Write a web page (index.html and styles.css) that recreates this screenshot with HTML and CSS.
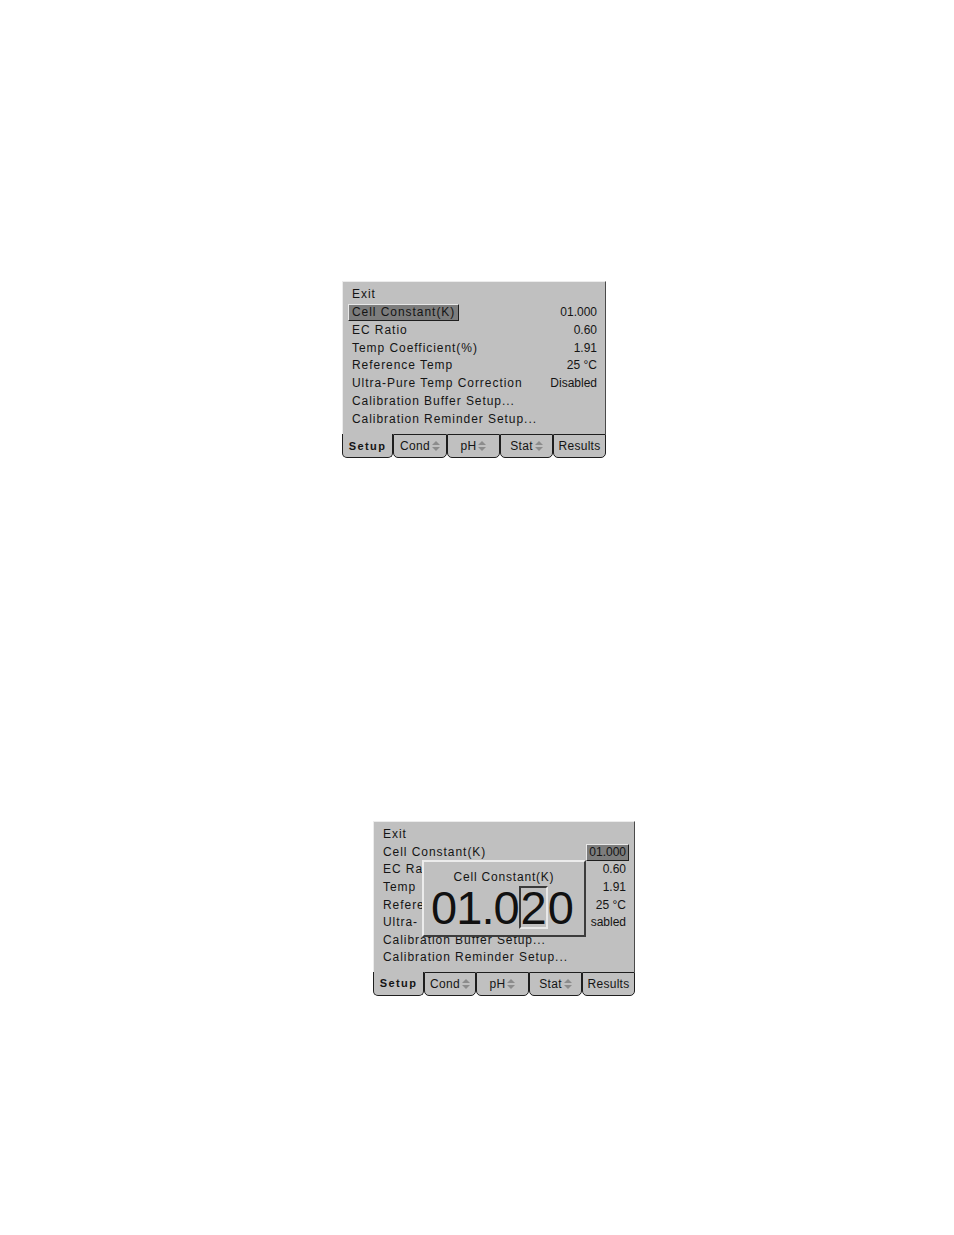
FILE: index.html
```html
<!DOCTYPE html>
<html>
<head>
<meta charset="utf-8">
<link rel="stylesheet" href="styles.css">
</head>
<body>
<div class="page">
  <div class="screen s1">
    <div class="list">
      <div class="row"><span class="cell lbl">Exit</span></div>
      <div class="row"><span class="cell lbl hl">Cell Constant(K)</span><span class="cell val">01.000</span></div>
      <div class="row"><span class="cell lbl">EC Ratio</span><span class="cell val">0.60</span></div>
      <div class="row"><span class="cell lbl">Temp Coefficient(%)</span><span class="cell val">1.91</span></div>
      <div class="row"><span class="cell lbl">Reference Temp</span><span class="cell val">25 °C</span></div>
      <div class="row"><span class="cell lbl">Ultra-Pure Temp Correction</span><span class="cell val">Disabled</span></div>
      <div class="row"><span class="cell lbl">Calibration Buffer Setup...</span></div>
      <div class="row"><span class="cell lbl">Calibration Reminder Setup...</span></div>
    </div>
    <div class="tabs">
      <div class="tab on t-setup">Setup</div>
      <div class="tab t-cond">Cond<svg class="arr" width="8" height="10" viewBox="0 0 8 10"><polygon points="0,4 4,0 8,4" /><polygon points="0,6 4,10 8,6" /></svg></div>
      <div class="tab t-ph">pH<svg class="arr" width="8" height="10" viewBox="0 0 8 10"><polygon points="0,4 4,0 8,4" /><polygon points="0,6 4,10 8,6" /></svg></div>
      <div class="tab t-stat">Stat<svg class="arr" width="8" height="10" viewBox="0 0 8 10"><polygon points="0,4 4,0 8,4" /><polygon points="0,6 4,10 8,6" /></svg></div>
      <div class="tab t-res">Results</div>
    </div>
  </div>

  <div class="screen s2">
    <div class="list">
      <div class="row"><span class="cell lbl">Exit</span></div>
      <div class="row"><span class="cell lbl">Cell Constant(K)</span><span class="cell val hl">01.000</span></div>
      <div class="row"><span class="cell lbl">EC Ra</span><span class="cell val">0.60</span></div>
      <div class="row"><span class="cell lbl">Temp</span><span class="cell val">1.91</span></div>
      <div class="row"><span class="cell lbl">Refere</span><span class="cell val">25 °C</span></div>
      <div class="row"><span class="cell lbl">Ultra-</span><span class="cell val">sabled</span></div>
      <div class="row"><span class="cell lbl">Calibration Buffer Setup...</span></div>
      <div class="row"><span class="cell lbl">Calibration Reminder Setup...</span></div>
    </div>
    <div class="tabs">
      <div class="tab on t-setup">Setup</div>
      <div class="tab t-cond">Cond<svg class="arr" width="8" height="10" viewBox="0 0 8 10"><polygon points="0,4 4,0 8,4" /><polygon points="0,6 4,10 8,6" /></svg></div>
      <div class="tab t-ph">pH<svg class="arr" width="8" height="10" viewBox="0 0 8 10"><polygon points="0,4 4,0 8,4" /><polygon points="0,6 4,10 8,6" /></svg></div>
      <div class="tab t-stat">Stat<svg class="arr" width="8" height="10" viewBox="0 0 8 10"><polygon points="0,4 4,0 8,4" /><polygon points="0,6 4,10 8,6" /></svg></div>
      <div class="tab t-res">Results</div>
    </div>
    <div class="popup">
      <div class="ptitle">Cell Constant(K)</div>
      <div class="pdigits">01.0<span class="cur">2</span>0</div>
    </div>
  </div>
</div>
</body>
</html>
```
FILE: styles.css
```css
html, body {
  margin: 0;
  padding: 0;
  background: #ffffff;
}

.page {
  display: flex;
  flex-direction: column;
  padding-top: 281px;
}

.screen {
  position: relative;
  font-family: "Liberation Sans", Arial, sans-serif;
  color: #141414;
}

.s1 {
  width: 264px;
  margin-left: 342px;
}

.s2 {
  width: 262px;
  margin-left: 373px;
  margin-top: 363px;
}

.list {
  box-sizing: border-box;
  background: #c0c0c0;
  border-top: 1px solid #ececec;
  border-left: 1px solid #ececec;
  border-right: 1px solid #4a4a4a;
  padding: 4px 5px 6px 5px;
}

.s2 .list {
  padding-bottom: 5px;
}

.row {
  display: flex;
  justify-content: space-between;
  align-items: center;
  height: 17.75px;
  font-size: 12px;
}

.s2 .row {
  height: 17.6px;
}

.cell {
  display: block;
  line-height: 15px;
  border: 1px solid transparent;
  white-space: nowrap;
}

.lbl {
  padding: 0 3px;
  letter-spacing: 0.95px;
}

.val {
  padding: 0 2px;
  letter-spacing: 0;
}

.hl {
  background: #7d7d7d;
  border-color: #e8e8e8 #1e1e1e #1e1e1e #e8e8e8;
}

.tabs {
  display: flex;
  height: 24px;
}

.tab {
  box-sizing: border-box;
  background: #c0c0c0;
  border: 1px solid #1e1e1e;
  border-radius: 0 0 5px 5px;
  display: flex;
  align-items: center;
  justify-content: center;
  gap: 2px;
  font-size: 12px;
  letter-spacing: 0.3px;
  white-space: nowrap;
}

.tab.on {
  border-top: none;
  font-weight: bold;
  font-size: 11px;
  letter-spacing: 1.4px;
}

.arr polygon {
  fill: #8c8c8c;
}

.s1 .t-setup { width: 51px; }
.s1 .t-cond { width: 54px; }
.s1 .t-ph { width: 53px; }
.s1 .t-stat { width: 53px; }
.s1 .t-res { width: 53px; }

.s2 .t-setup { width: 51px; }
.s2 .t-cond { width: 52px; }
.s2 .t-ph { width: 53px; }
.s2 .t-stat { width: 53px; }
.s2 .t-res { width: 53px; }

.popup {
  position: absolute;
  left: 49px;
  top: 39px;
  width: 164px;
  height: 77px;
  box-sizing: border-box;
  background: #c0c0c0;
  border: 2px solid;
  border-color: #ececec #3c3c3c #3c3c3c #ececec;
  display: flex;
  flex-direction: column;
  align-items: center;
}

.ptitle {
  margin-top: 8px;
  font-size: 12px;
  line-height: 14px;
  letter-spacing: 0.8px;
}

.pdigits {
  margin-top: 2px;
  padding-right: 4px;
  font-size: 47px;
  line-height: 43px;
  letter-spacing: -1px;
  white-space: nowrap;
  color: #111111;
}

.cur {
  display: inline-block;
  line-height: 39px;
  border: 2px solid;
  border-color: #3a3a3a #e8e8e8 #e8e8e8 #3a3a3a;
}
```
